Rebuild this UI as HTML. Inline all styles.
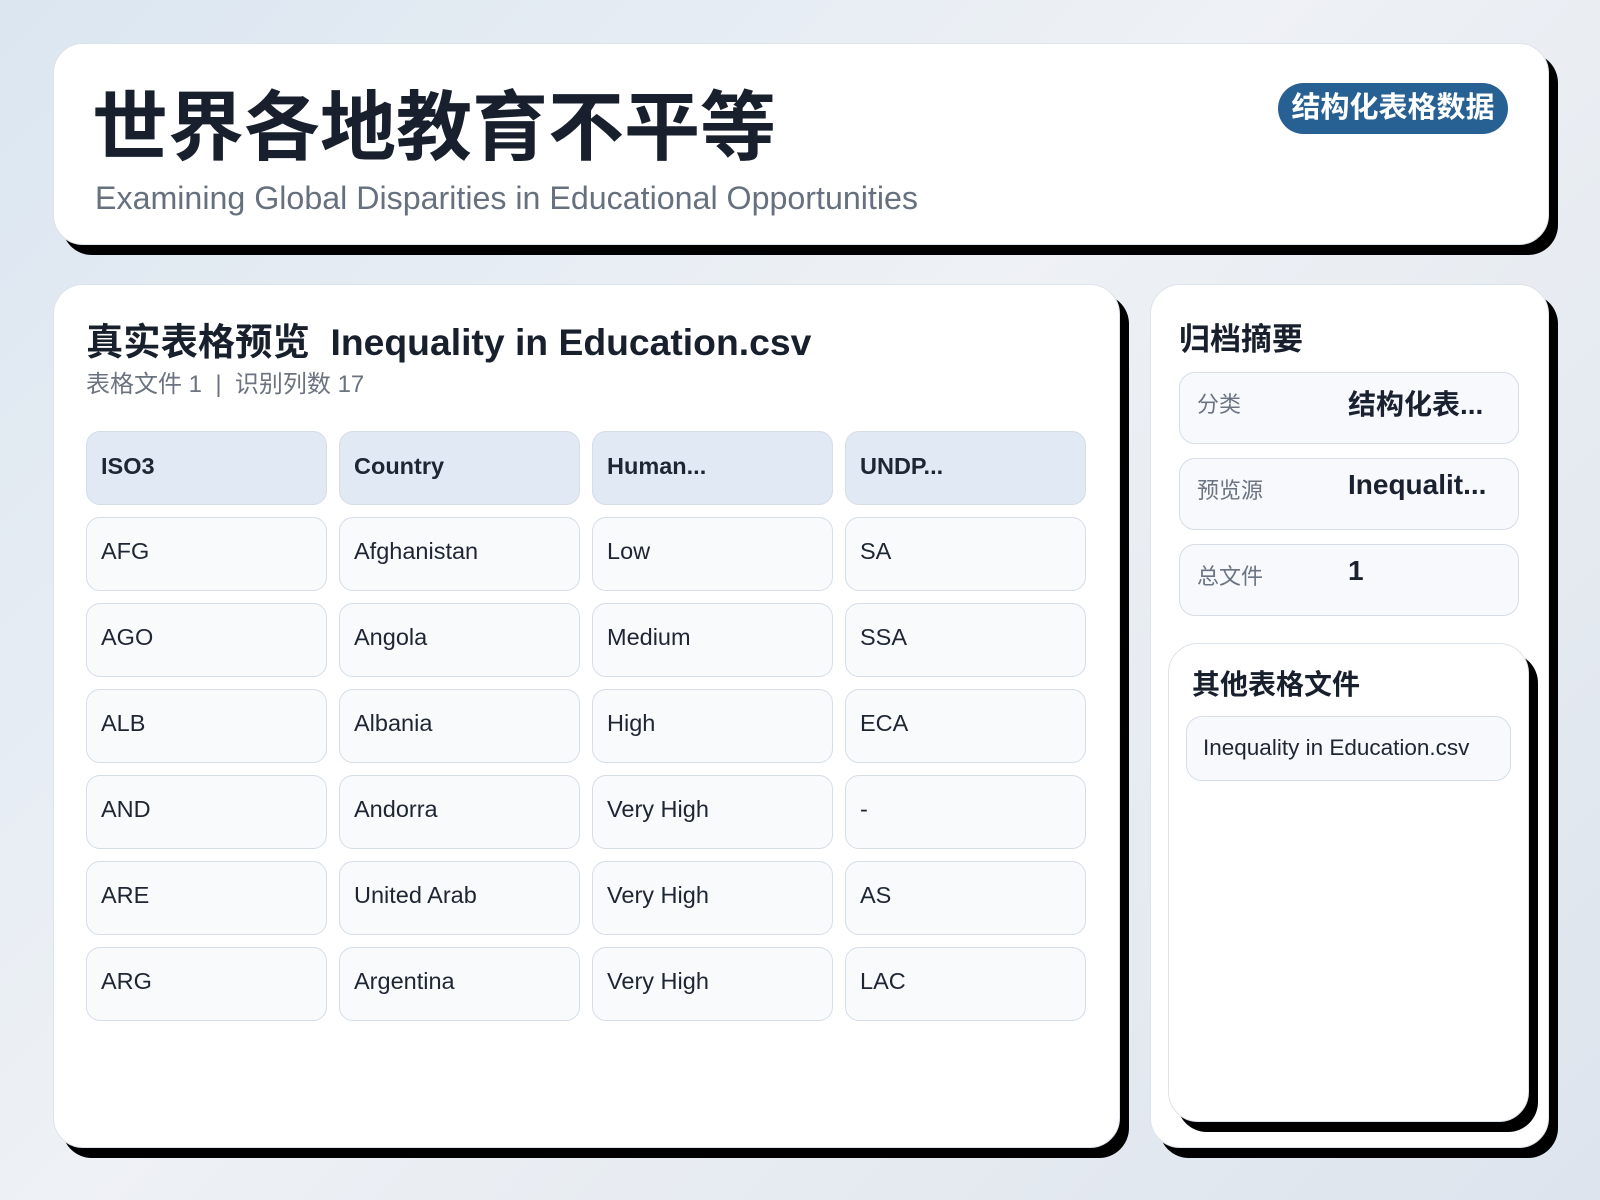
<!DOCTYPE html>
<html><head><meta charset="utf-8"><style>
*{box-sizing:border-box;margin:0;padding:0}
body{width:1600px;height:1200px;overflow:hidden;background:linear-gradient(135deg,#dbe6f1 0%,#eef1f5 45%,#dde4ed 100%);font-family:"Liberation Sans","Noto Sans CJK SC",sans-serif;color:#1a2130;position:relative}
.card{position:absolute;background:#fff;border:1px solid #dde3ea;border-radius:30px;box-shadow:9px 10px 0 #000}
.abs{position:absolute;white-space:nowrap}
.cell{position:absolute;width:241px;height:74px;border:1px solid #d6dde7;border-radius:14px;background:#f8fafc;font-size:23.5px;padding-left:14px;line-height:66px;color:#1e2533}
.hd{background:#e1e9f4;font-weight:bold;line-height:68px}
.row{position:absolute;left:1179px;width:340px;height:72px;border:1px solid #d6dde7;border-radius:16px;background:#f7f9fc}
.row .l{position:absolute;left:17px;top:14px;font-size:22px;color:#6b7482}
.row .v{position:absolute;left:168px;top:10px;font-size:28px;font-weight:bold;color:#1a2130}
</style></head><body>
<div class="card" style="left:53px;top:43px;width:1496px;height:202px"></div>
<div class="abs" style="left:92px;top:83px;font-size:76px;font-weight:bold;line-height:92px;color:#18202d">世界各地教育不平等</div>
<div class="abs" style="left:95px;top:180px;font-size:32.2px;color:#66707e">Examining Global Disparities in Educational Opportunities</div>
<div class="abs" style="left:1278px;top:83px;width:230px;height:51px;border-radius:26px;background:#276092;color:#fff;font-size:29px;font-weight:bold;text-align:center;line-height:51px">结构化表格数据</div>

<div class="card" style="left:53px;top:284px;width:1067px;height:864px"></div>
<div class="abs" style="left:86px;top:318px;font-size:37.3px;font-weight:bold;line-height:48px;color:#18202d">真实表格预览&nbsp;&nbsp;Inequality in Education.csv</div>
<div class="abs" style="left:86px;top:364px;font-size:24px;color:#6b7280">表格文件 1 &nbsp;|&nbsp; 识别列数 17</div>

<div class="cell hd" style="left:86px;top:431px">ISO3</div>
<div class="cell hd" style="left:339px;top:431px">Country</div>
<div class="cell hd" style="left:592px;top:431px">Human...</div>
<div class="cell hd" style="left:845px;top:431px">UNDP...</div>

<div class="cell" style="left:86px;top:517px">AFG</div><div class="cell" style="left:339px;top:517px">Afghanistan</div><div class="cell" style="left:592px;top:517px">Low</div><div class="cell" style="left:845px;top:517px">SA</div>
<div class="cell" style="left:86px;top:603px">AGO</div><div class="cell" style="left:339px;top:603px">Angola</div><div class="cell" style="left:592px;top:603px">Medium</div><div class="cell" style="left:845px;top:603px">SSA</div>
<div class="cell" style="left:86px;top:689px">ALB</div><div class="cell" style="left:339px;top:689px">Albania</div><div class="cell" style="left:592px;top:689px">High</div><div class="cell" style="left:845px;top:689px">ECA</div>
<div class="cell" style="left:86px;top:775px">AND</div><div class="cell" style="left:339px;top:775px">Andorra</div><div class="cell" style="left:592px;top:775px">Very High</div><div class="cell" style="left:845px;top:775px">-</div>
<div class="cell" style="left:86px;top:861px">ARE</div><div class="cell" style="left:339px;top:861px">United Arab</div><div class="cell" style="left:592px;top:861px">Very High</div><div class="cell" style="left:845px;top:861px">AS</div>
<div class="cell" style="left:86px;top:947px">ARG</div><div class="cell" style="left:339px;top:947px">Argentina</div><div class="cell" style="left:592px;top:947px">Very High</div><div class="cell" style="left:845px;top:947px">LAC</div>

<div class="card" style="left:1150px;top:284px;width:399px;height:864px"></div>
<div class="abs" style="left:1179px;top:319px;font-size:31px;font-weight:bold;line-height:42px;color:#18202d">归档摘要</div>
<div class="row" style="top:372px"><span class="l">分类</span><span class="v">结构化表...</span></div>
<div class="row" style="top:458px"><span class="l">预览源</span><span class="v">Inequalit...</span></div>
<div class="row" style="top:544px"><span class="l">总文件</span><span class="v">1</span></div>

<div class="card" style="left:1168px;top:643px;width:361px;height:479px"></div>
<div class="abs" style="left:1192px;top:666px;font-size:28px;font-weight:bold;line-height:38px;color:#18202d">其他表格文件</div>
<div class="abs" style="left:1186px;top:716px;width:325px;height:65px;border:1px solid #d6dde7;border-radius:16px;background:#f7f9fc;font-size:22.5px;line-height:61px;padding-left:16px;color:#1e2533">Inequality in Education.csv</div>
</body></html>
